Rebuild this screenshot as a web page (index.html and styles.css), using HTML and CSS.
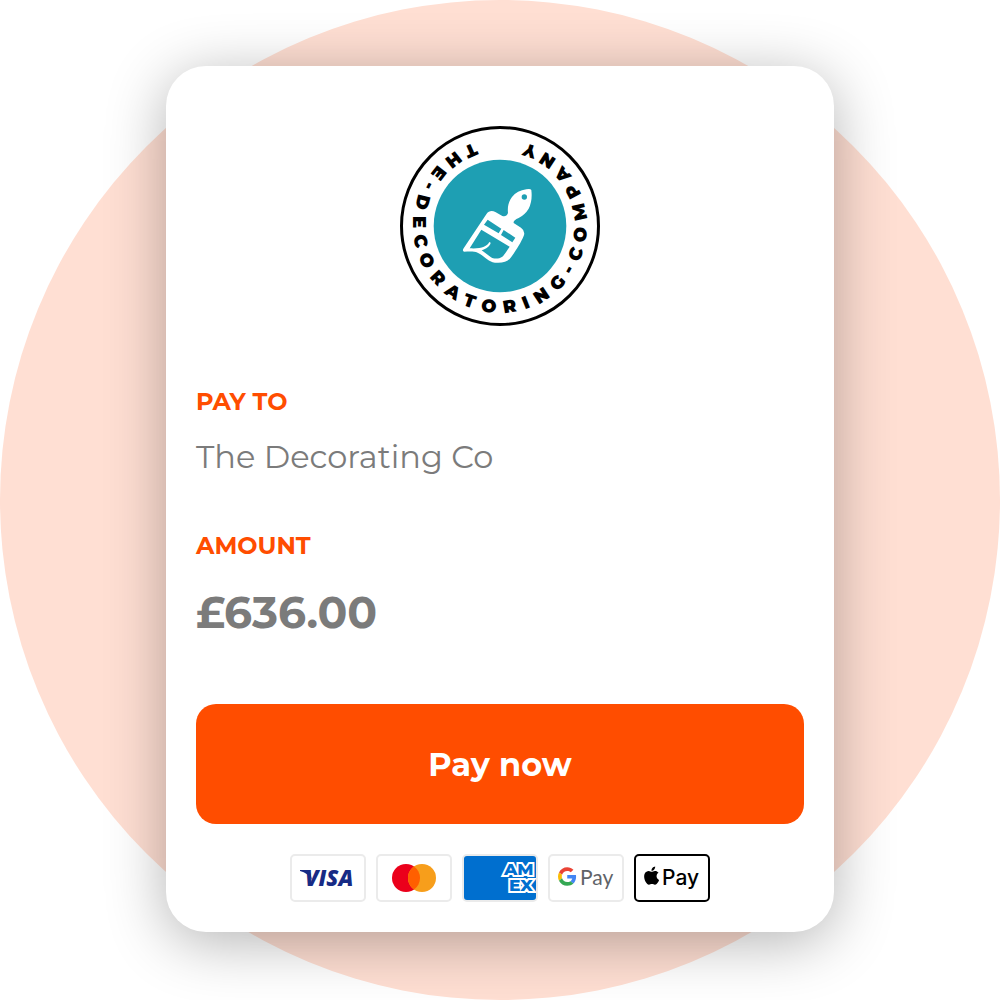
FILE: index.html
```html
<!DOCTYPE html>
<html lang="en">
<head>
<meta charset="utf-8">
<meta name="viewport" content="width=device-width, initial-scale=1">
<title>Pay The Decorating Co</title>
<link rel="stylesheet" href="styles.css">
</head>
<body>
<main class="stage">
  <section class="card">
    <svg class="logo" viewBox="0 0 200 200" role="img" aria-label="The Decorating Company">
      <circle cx="100" cy="100" r="98.5" fill="#fff" stroke="#000" stroke-width="3"/>
      <circle cx="100" cy="100" r="66.3" fill="#1e9fb3"/>
      <path id="ring" fill="none" d="M74 17A87 87 0 0 0 100 187A87 87 0 0 0 104 13.1"/>
      <text class="logo-text"><textPath href="#ring">THE-DECORATORING-COMPANY</textPath></text>
      <g transform="translate(55 54) scale(.3333)">
        <path fill="#fff" d="M214 28Q226 25 229 30Q233 62 221 86Q210 104 191 114Q174 121 176 129L198 143Q212 153 206 168C199 186 181 215 167 233C157 246 141 250 120 248C96 245 86 225 68 218C56 213 42 215 27 215Q21 213 26 205L95 101C101 92 112 91 121 96L142 108Q154 112 159 99C157 80 161 65 171 51C181 38 196 31 214 28Z"/>
        <circle cx="208" cy="51" r="8" fill="#1e9fb3"/>
        <path fill="#1e9fb3" d="M98 119L139 146L131 160L87 134ZM146 150L181 173L172 187L138 165ZM79 149L164 200C156 211 150 223 142 230C132 237 116 238 107 231L80 211C93 207 106 197 107 188L103 186C96 200 78 207 44 205Z"/>
      </g>
    </svg>

    <dl class="details">
      <div class="detail">
        <dt class="label">PAY TO</dt>
        <dd class="payee">The Decorating Co</dd>
      </div>
      <div class="detail">
        <dt class="label">AMOUNT</dt>
        <dd class="amount">£636.00</dd>
      </div>
    </dl>

    <button class="pay" type="button">Pay now</button>

    <ul class="methods">
      <li><svg class="method" viewBox="0 0 76 48" role="img" aria-label="Visa">
        <rect x="1" y="1" width="74" height="46" rx="4" fill="#fff" stroke="#ebebeb" stroke-width="2"/>
        <path fill="#172b85" d="M10 16H17Q19 16 20 18L22 26Q18 19 10 17Z"/>
        <text class="visa" x="15" y="32">VISA</text>
      </svg></li>
      <li><svg class="method" viewBox="0 0 76 48" role="img" aria-label="Mastercard">
        <rect x="1" y="1" width="74" height="46" rx="4" fill="#fff" stroke="#ebebeb" stroke-width="2"/>
        <circle cx="30" cy="24" r="14" fill="#eb001b"/>
        <circle cx="46" cy="24" r="14" fill="#f79e1b"/>
        <path fill="#ff5f00" d="M38 12.5a14 14 0 0 1 0 23a14 14 0 0 1 0-23Z"/>
      </svg></li>
      <li><svg class="method" viewBox="0 0 76 48" role="img" aria-label="American Express">
        <clipPath id="amex"><rect x="2" y="2" width="72" height="44" rx="3"/></clipPath>
        <rect x="1" y="1" width="74" height="46" rx="4" fill="#006fcf" stroke="#ebebeb" stroke-width="2"/>
        <g clip-path="url(#amex)">
          <text class="amex" x="42" y="21">AM</text>
          <text class="amex" x="47" y="37">EX</text>
        </g>
      </svg></li>
      <li><svg class="method" viewBox="0 0 76 48" role="img" aria-label="Google Pay">
        <rect x="1" y="1" width="74" height="46" rx="4" fill="#fff" stroke="#ebebeb" stroke-width="2"/>
        <g transform="translate(10 13.3) scale(.385)">
          <path fill="#ea4335" d="M24 9.5c3.54 0 6.71 1.22 9.21 3.6l6.85-6.85C35.9 2.38 30.47 0 24 0 14.62 0 6.51 5.38 2.56 13.22l7.98 6.19C12.43 13.72 17.74 9.5 24 9.5z"/>
          <path fill="#4285f4" d="M46.98 24.55c0-1.57-.15-3.09-.38-4.55H24v9.02h12.94c-.58 2.96-2.26 5.48-4.78 7.18l7.73 6c4.51-4.18 7.09-10.36 7.09-17.65z"/>
          <path fill="#fbbc05" d="M10.53 28.59c-.48-1.45-.76-2.99-.76-4.59s.27-3.14.76-4.59l-7.98-6.19C.92 16.46 0 20.12 0 24c0 3.88.92 7.54 2.56 10.78l7.97-6.19z"/>
          <path fill="#34a853" d="M24 48c6.48 0 11.93-2.13 15.89-5.81l-7.73-6c-2.15 1.45-4.92 2.3-8.16 2.3-6.26 0-11.57-4.22-13.47-9.91l-7.98 6.19C6.51 42.62 14.62 48 24 48z"/>
        </g>
        <text class="gpay" x="32" y="31">Pay</text>
      </svg></li>
      <li><svg class="method" viewBox="0 0 76 48" role="img" aria-label="Apple Pay">
        <rect x="1" y="1" width="74" height="46" rx="4" fill="#fff" stroke="#000" stroke-width="2"/>
        <g transform="translate(7.6 12.2) scale(.047)">
          <path d="M398 333c0-48 40-71 42-72-23-33-58-38-71-39-30-3-59 18-74 18s-39-17-64-17c-33 1-63 19-80 48-34 59-9 147 24 195 17 24 36 50 62 49 25-1 34-16 64-16s38 16 64 15c27 0 44-24 60-48 19-27 27-54 27-55-1-1-53-20-54-78ZM349 190c13-17 23-40 20-63-20 1-44 13-58 30-13 15-24 38-21 61 22 2 45-12 59-28Z" transform="translate(-80 -120)"/>
        </g>
        <text class="applepay" x="28" y="31">Pay</text>
      </svg></li>
    </ul>
  </section>
</main>
</body>
</html>
```
FILE: styles.css
```css
* {
  box-sizing: border-box;
}

body {
  margin: 0;
  background: #fff;
  color: #7b7b7b;
  font-family: "Montserrat", "Inter", sans-serif;
}

.stage {
  display: flex;
  align-items: center;
  justify-content: center;
  width: 100%;
  aspect-ratio: 1;
  padding-bottom: 2px;
  border-radius: 50%;
  background: #ffdfd3;
}

.card {
  display: flex;
  flex-direction: column;
  width: 100%;
  max-width: 668px;
  padding: 60px 30px 30px;
  border-radius: 40px;
  background: #fff;
  box-shadow: 0 10px 60px rgba(0, 0, 0, 0.3);
}

.logo {
  width: 200px;
  align-self: center;
  margin-bottom: 61px;
}

.logo-text {
  font-size: 18px;
  font-weight: 900;
  letter-spacing: 8px;
}

.details {
  display: flex;
  flex-direction: column;
  gap: 54px;
  margin: 0 0 61px;
}

.detail {
  display: flex;
  flex-direction: column;
  gap: 20px;
}

.label {
  color: #ff4d00;
  font-size: 24px;
  font-weight: 700;
  line-height: 30px;
}

.payee,
.amount {
  margin: 0;
}

.payee {
  font-size: 32px;
  font-weight: 400;
  line-height: 40px;
}

.amount {
  font-size: 44px;
  font-weight: 700;
  line-height: 62px;
}

.pay {
  height: 120px;
  margin-bottom: 30px;
  border: 0;
  border-radius: 20px;
  background: #ff4d00;
  color: #fff;
  font: inherit;
  font-size: 32px;
  font-weight: 700;
  cursor: pointer;
}

.methods {
  display: flex;
  justify-content: center;
  gap: 10px;
  margin: 0;
  padding: 0;
  list-style: none;
}

.method {
  display: block;
  width: 76px;
}

.visa {
  fill: #172b85;
  font-family: "Open Sans", sans-serif;
  font-size: 22px;
  font-style: italic;
  font-weight: 800;
}

.amex {
  fill: #006fcf;
  stroke: #fff;
  stroke-width: 4px;
  paint-order: stroke;
  font-size: 17px;
  font-weight: 800;
}

.gpay {
  fill: #5f6368;
  font-family: "Lato", sans-serif;
  font-size: 21px;
}

.applepay {
  font-family: "Inter", sans-serif;
  font-size: 21px;
  font-weight: 500;
}
```
